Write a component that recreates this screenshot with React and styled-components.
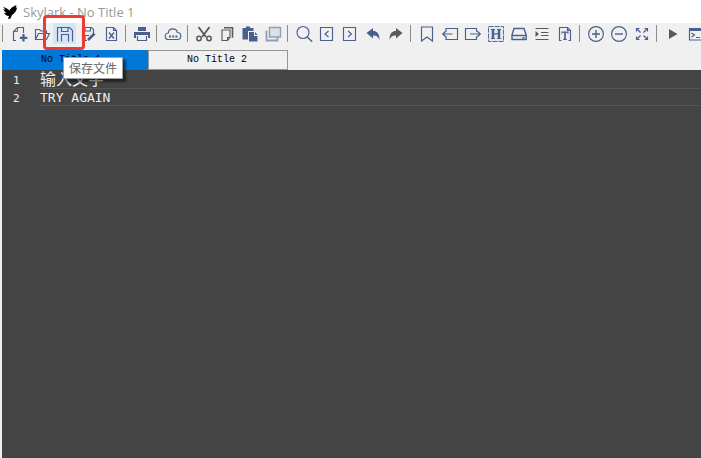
import React, { useState } from "react";
import styled, { createGlobalStyle, css } from "styled-components";

const GlobalStyle = createGlobalStyle`
  * {
    box-sizing: border-box;
  }
  html, body, #root {
    height: 100%;
    margin: 0;
  }
  body {
    overflow: hidden;
    background: #f0f0f0;
    font-family: "Noto Sans", "Noto Sans CJK SC", sans-serif;
  }
`;

const Window = styled.div`
  display: flex;
  flex-direction: column;
  height: 100%;
`;

const TitleBar = styled.header`
  display: flex;
  align-items: center;
  gap: 5px;
  flex: none;
  height: 23px;
  padding-left: 2px;
  background: #fff;
`;

const Title = styled.h1`
  margin: 0;
  color: #999;
  font-family: "Open Sans", "Noto Sans", sans-serif;
  font-size: 13px;
  font-weight: 400;
  line-height: 18px;
`;

const ToolBar = styled.div`
  display: flex;
  flex: none;
  height: 27px;
  padding-left: 2px;
  background: #f0f0f0;
`;

const ToolGroup = styled.div`
  display: flex;
  flex: none;
  padding-right: 3px;
`;

const Separator = styled.div`
  flex: none;
  width: 1px;
  height: 17px;
  margin: 2px 4px 0 0;
  background: #8c8c8c;
`;

const ToolButton = styled.button`
  position: relative;
  flex: none;
  display: flex;
  align-items: center;
  justify-content: center;
  width: 23px;
  height: 21px;
  padding: 0;
  border: 0;
  color: ${(p) => (p.$dark ? "#5a5a5a" : p.$pale ? "#8f9dbb" : "#4a5f8e")};
  background: ${(p) => (p.$hot ? "#d5e5f5" : "transparent")};
`;

const Highlight = styled.span`
  position: absolute;
  z-index: 1;
  inset: -8px -9px -6px -10px;
  border: 3px solid #ee3a35;
  border-radius: 4px;
`;

const Tip = styled.span`
  position: absolute;
  z-index: 2;
  top: 34px;
  left: 10px;
  padding: 1px 5px;
  border: 1px solid #a0a0a0;
  color: #666;
  background: #fff;
  box-shadow: 3px 3px 2px rgba(0, 0, 0, 0.5);
  font-family: "Noto Sans CJK SC", sans-serif;
  font-size: 12px;
  line-height: 18px;
  white-space: nowrap;
`;

const TabBar = styled.div`
  display: flex;
  flex: none;
  height: 20px;
  padding-left: 2px;
`;

const Tab = styled.button`
  width: 140px;
  padding: 0 2px 0 0;
  border: 1px solid #949494;
  color: #000;
  background: #f0f0f0;
  font-family: "Liberation Mono", monospace;
  font-size: 10px;
  line-height: 18px;
  ${(p) =>
    p.$active &&
    css`
      width: 146px;
      padding-right: 8px;
      border-color: #0078d7;
      background: #0078d7;
    `}
`;

const Editor = styled.main`
  flex: 1;
  margin-left: 2px;
  color: #eee;
  background: #444;
  font-family: "DejaVu Sans Mono", "Noto Sans CJK SC", monospace;
`;

const Line = styled.div`
  display: flex;
  height: 18px;
  line-height: 18px;
`;

const LineNumber = styled.span`
  flex: none;
  width: 38px;
  padding-left: 11px;
  font-size: 11px;
  line-height: 22px;
`;

const LineText = styled.div`
  flex: 1;
  border: solid ${(p) => (p.$current ? "#545454" : "transparent")};
  border-width: 1px 0;
  outline: none;
  font-size: ${(p) => (p.$wide ? 16 : 13)}px;
`;

const Svg = styled.svg`
  display: block;
  fill: none;
  stroke: currentColor;
  stroke-width: 1.15;
`;

const solid = { fill: "currentColor", stroke: "none" };

const icons = {
  create: (
    <>
      <path d="M6 15.500H3.500V6.500l4-4h6V8" />
      <path d="M7.500 2.500v4h-4" strokeWidth="0.9" />
      <path d="M13.500 9v7.500M9.800 12.800h7.500" strokeWidth="2.200" />
    </>
  ),
  open: <path d="M2.500 14V4.500h4L8 6h5.500v2.500M2.500 14.500l3-6h11l-3 6z" />,
  save: (
    <>
      <path d="M1.500 16.500v-14h12l3 3v11" />
      <path d="M5.500 2.500v4h6.500v-4M5.500 16.500v-7h7v7" />
    </>
  ),
  saveAs: (
    <>
      <path d="M8 15.500H3.500v-13h9l2 2V8M6 2.500v3.500h5.500V2.500M6 15v-4.500h4" />
      <path d="M9 15l6.500-6.500" strokeWidth="2.600" />
    </>
  ),
  close: (
    <>
      <path d="M4.500 2.500h7l3 3v10h-10zM11.500 2.500v3h3" />
      <path d="M7 7.500l5 6M12 7.500l-5 6" strokeWidth="1.400" />
    </>
  ),
  print: (
    <>
      <path d="M5 2h8v4H5z" {...solid} />
      <path d="M1 7h16v6h-2v-3H3v3H1z" {...solid} />
      <path d="M4.500 11v4.500h9V11" />
    </>
  ),
  cloud: (
    <>
      <path d="M4.500 14.500C2.500 14.500 1.200 13 1.200 11.200S2.800 8 4.300 8C4.500 5.200 6.500 3.800 8.800 3.800S13 5.300 13.300 7.500c2 0 3.500 1.500 3.500 3.500s-1.500 3.500-3.300 3.500z" />
      <path d="M5 10.500h2v2H5zM8.200 10.500h2v2h-2zM11.400 10.500h2v2h-2z" {...solid} />
    </>
  ),
  cut: (
    <>
      <path d="M3.500 2L11 12M14.500 2L7 12" strokeWidth="1.800" />
      <circle cx="4" cy="13.500" r="2.200" strokeWidth="1.500" />
      <circle cx="14" cy="13.500" r="2.200" strokeWidth="1.500" />
    </>
  ),
  copy: (
    <>
      <path d="M6 2.800h8.500v10" strokeWidth="1.600" />
      <path d="M4 5h8v7.500L9.500 15.500H4zM12 12.500H9.500v3" />
    </>
  ),
  paste: (
    <>
      <path d="M1.500 3H5V1.500h4V3h3.500v3H7v8.500H1.500z" {...solid} />
      <path d="M8 7h5v4h3.500v5.500H8z" {...solid} />
      <path d="M14 7l2.500 3H14z" {...solid} />
    </>
  ),
  copies: (
    <>
      <path d="M5.500 2.500h11v9.500h-11z" fill="#dce1e9" strokeWidth="1.400" />
      <path d="M2.500 5.500v10h11v-3" strokeWidth="1.800" />
    </>
  ),
  search: (
    <>
      <circle cx="8" cy="7.500" r="6" />
      <path d="M12.200 12l5 4.800" strokeWidth="1.400" />
    </>
  ),
  previous: <path d="M2.500 2.500h12v13h-12zM10.500 6L7 9l3.500 3" />,
  next: <path d="M2.500 2.500h12v13h-12zM7 6l3.500 3L7 12" />,
  undo: <path d="M2.500 8L9 3v3c4 0 6.500 2.500 6.500 9-1.500-3.500-3-4.500-6.500-4.500v3z" {...solid} />,
  redo: <path d="M15.500 8L9 3v3C5 6 2.500 8.500 2.500 15c1.500-3.500 3-4.500 6.500-4.500v3z" {...solid} />,
  bookmark: <path d="M3.500 2h11v14L9 12l-5.500 4z" />,
  back: (
    <>
      <path d="M5 6.500v-3h11.500v11H5v-3" />
      <path d="M11.500 9H1.500M5 6L1.700 9 5 12" />
    </>
  ),
  forward: (
    <>
      <path d="M12.500 6.500v-3H1.500v11h11v-3" />
      <path d="M6 9h10.500M13 6l3.300 3-3.300 3" />
    </>
  ),
  heading: (
    <>
      <path d="M1.500 1.500h15v15h-15z" fill="#e4e8ee" strokeWidth="0.900" strokeDasharray="5 1" />
      <path d="M4 4h4v1H7.200v3.300h3.600V5H10V4h4v1h-.8v8h.8v1h-4v-1h.8V9.500H7.200V13H8v1H4v-1h.8V5H4z" {...solid} />
    </>
  ),
  drive: <path d="M4 3.500h10l2.200 6.500v4.500H2V10zM2 10.500h14M12.500 12.800h2" strokeWidth="1.400" />,
  indent: (
    <>
      <path d="M2.500 3.500h13M8 7.500h7.500M8 10.500h7.500M2.500 14.500h13" />
      <path d="M2.500 6L6 9l-3.500 3z" {...solid} />
    </>
  ),
  text: (
    <>
      <path d="M5.500 15.500H3.500v-13h8l3 3v10h-2M11.500 2.500v3h3" />
      <path d="M5.500 6.500h7v2.200h-1V7.700h-1.700v6.100h1V15H7.200v-1.200h1V7.700H6.500v1h-1z" {...solid} />
    </>
  ),
  zoomIn: (
    <>
      <circle cx="9" cy="9" r="7.400" />
      <path d="M9 5v8M5 9h8" strokeWidth="1.400" />
    </>
  ),
  zoomOut: (
    <>
      <circle cx="9" cy="9" r="7.400" />
      <path d="M5 9h8" strokeWidth="1.400" />
    </>
  ),
  fullScreen: (
    <>
      <path d="M3.500 6.500v-3h3M11.500 3.500h3v3M3.500 11.500v3h3M14.500 11.500v3h-3" />
      <path d="M3.500 3.500l4 4M14.500 3.500l-4 4M3.500 14.500l4-4M14.500 14.500l-4-4" />
    </>
  ),
  run: <path d="M5 4l8.500 5L5 14z" {...solid} />,
  terminal: (
    <>
      <path d="M2.500 3.500h15v11.500h-15z" />
      <path d="M2 3h15v3H2z" {...solid} />
      <path d="M4.500 8l3 2-3 2M9 12.500h4" />
    </>
  ),
};

const groups = [
  [
    ["create", "新建文件"],
    ["open", "打开文件"],
    ["save", "保存文件"],
    ["saveAs", "另存为"],
    ["close", "关闭文件"],
  ],
  [["print", "打印"]],
  [["cloud", "远程文件"]],
  [
    ["cut", "剪切", "dark"],
    ["copy", "复制", "dark"],
    ["paste", "粘贴"],
    ["copies", "全部复制", "pale"],
  ],
  [
    ["search", "查找"],
    ["previous", "查找上一个"],
    ["next", "查找下一个"],
    ["undo", "撤销"],
    ["redo", "重做", "dark"],
  ],
  [
    ["bookmark", "书签"],
    ["back", "上一个书签"],
    ["forward", "下一个书签"],
    ["heading", "十六进制"],
    ["drive", "磁盘"],
    ["indent", "缩进", "dark"],
    ["text", "文本"],
  ],
  [
    ["zoomIn", "放大"],
    ["zoomOut", "缩小"],
    ["fullScreen", "全屏"],
  ],
  [
    ["run", "运行", "dark"],
    ["terminal", "终端"],
  ],
];

const lines = ["输入文字", "TRY AGAIN"];
const tabs = ["No Title 1", "No Title 2"];

function Logo() {
  return (
    <svg width="16" height="16" viewBox="0 0 16 16" aria-hidden="true">
      <path
        d="M1 2.500C3.500 4 5.500 4.500 7.500 6.500 8.500 4.500 10 3 14.500 1L13.800 4l1.500-.8-1.500 4-1.800 2.300-2 1.500-1.500 3.500-2.500.5 1-3C4 12 3 10.500 2 9l2.500.3C3 8 2 7 1.200 5l2.300.8z"
        fill="#000"
      />
    </svg>
  );
}

function Tool({ name, label, tone, hot }) {
  return (
    <ToolButton
      aria-label={label}
      $dark={tone === "dark"}
      $pale={tone === "pale"}
      $hot={hot}
    >
      <Svg width="18" height="18" viewBox="0 0 18 18" aria-hidden="true">
        {icons[name]}
      </Svg>
      {hot && <Highlight />}
      {hot && <Tip role="tooltip">{label}</Tip>}
    </ToolButton>
  );
}

function App() {
  const [active, setActive] = useState(0);

  return (
    <Window>
      <GlobalStyle />
      <TitleBar>
        <Logo />
        <Title>Skylark - {tabs[active]}</Title>
      </TitleBar>
      <ToolBar role="toolbar">
        {groups.map((group, i) => (
          <ToolGroup key={i}>
            <Separator />
            {group.map(([name, label, tone]) => (
              <Tool
                key={name}
                name={name}
                label={label}
                tone={tone}
                hot={name === "save"}
              />
            ))}
          </ToolGroup>
        ))}
      </ToolBar>
      <TabBar role="tablist">
        {tabs.map((tab, i) => (
          <Tab
            key={tab}
            role="tab"
            aria-selected={i === active}
            $active={i === active}
            onClick={() => setActive(i)}
          >
            {tab}
          </Tab>
        ))}
      </TabBar>
      <Editor>
        {lines.map((line, i) => (
          <Line key={line}>
            <LineNumber>{i + 1}</LineNumber>
            <LineText
              role="textbox"
              aria-label={`Line ${i + 1}`}
              contentEditable
              suppressContentEditableWarning
              $wide={i === 0}
              $current={i === 1}
            >
              {line}
            </LineText>
          </Line>
        ))}
      </Editor>
    </Window>
  );
}

export default App;
